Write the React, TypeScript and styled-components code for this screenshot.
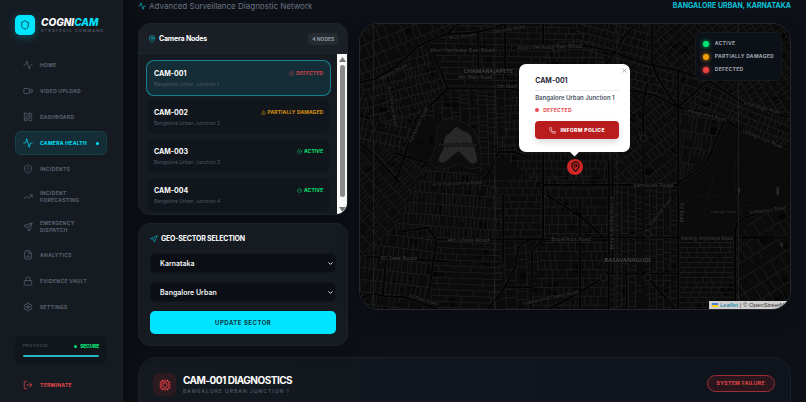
import React from "react";
import styled, { createGlobalStyle, css } from "styled-components";
import {
  Activity, Video, LayoutDashboard, ShieldAlert, Shield, TrendingUp, Send, FileChartColumn, Lock, Settings,
  LogOut, MapPin, Navigation, ChevronDown, CircleAlert, TriangleAlert, CircleCheck, Phone, X, Cpu,
} from "lucide-react";

const cyan = "#00e5ff";
const red = "#e5484d";
const green = "#00e676";
const amber = "#d9920f";

const GlobalStyle = createGlobalStyle`
  *, *::before, *::after { box-sizing: border-box; }
  html, body { margin: 0; background: #0d1117; }
  body { font-family: Inter, "Liberation Sans", sans-serif; color: #fff; overflow: hidden; }
  button, select { font-family: inherit; margin: 0; }
  h1, h2, h3, p, ul { margin: 0; padding: 0; }
  ul { list-style: none; }
  svg { flex: none; display: block; }
`;

const Page = styled.div`
  display: grid;
  grid-template-columns: 123px minmax(0, 1fr);
  height: 100vh;
  overflow: hidden;
  background: linear-gradient(90deg, #0a0c10 123px, #0d1117 150px);
`;

/* ---------- sidebar ---------- */

const Sidebar = styled.aside`
  display: flex;
  flex-direction: column;
  padding: 15px 15px 0 15px;
  background: #161b22;
  border-right: 1px solid #1b2027;
`;

const Brand = styled.div`
  display: flex;
  align-items: center;
  gap: 6px;
  height: 20px;
`;

const BrandMark = styled.div`
  display: grid;
  place-items: center;
  width: 20px;
  height: 20px;
  border-radius: 5px;
  background: ${cyan};
  color: #10262e;
  box-shadow: 0 2px 8px rgba(0, 229, 255, 0.3);
`;

const BrandName = styled.h1`
  font-size: 10px;
  line-height: 12px;
  font-weight: 800;
  font-style: italic;
  span { color: ${cyan}; }
`;

const BrandTag = styled.p`
  font-size: 4px;
  line-height: 6px;
  font-weight: 700;
  letter-spacing: 1px;
  color: #4b5260;
  white-space: nowrap;
`;

const Nav = styled.nav`
  display: flex;
  flex-direction: column;
  gap: 2px;
  margin-top: 18px;
`;

const NavLink = styled.a<{ $active?: boolean; $danger?: boolean }>`
  display: flex;
  align-items: center;
  gap: 7px;
  min-height: 24px;
  padding: 6px 7px;
  border-radius: 6px;
  border: 1px solid transparent;
  font-size: 5px;
  line-height: 7px;
  font-weight: 700;
  letter-spacing: 0.3px;
  text-decoration: none;
  color: #5b6270;
  svg { width: 10px; height: 10px; stroke-width: 1.8; }
  ${(p) => p.$active && css`
    color: ${cyan};
    background: #142d36;
    border-color: #16404a;
    white-space: nowrap;
  `}
  ${(p) => p.$danger && css`color: ${red};`}
`;

const NavText = styled.span`
  flex: 1;
`;

const Dot = styled.i<{ $color: string; $size: number; $glow?: boolean }>`
  display: block;
  flex: none;
  width: ${(p) => p.$size}px;
  height: ${(p) => p.$size}px;
  border-radius: 50%;
  background: ${(p) => p.$color};
  ${(p) => p.$glow && css`box-shadow: 0 0 4px ${p.$color};`}
`;

const Protocol = styled.section`
  margin: 17px 0 9px;
  padding: 7px 8px;
  border-radius: 6px;
  background: #11161c;
`;

const ProtocolRow = styled.div`
  display: flex;
  justify-content: space-between;
  align-items: center;
  font-size: 4px;
  line-height: 6px;
  font-weight: 700;
  letter-spacing: 0.5px;
  color: #3f4652;
`;

const Secure = styled.span`
  display: flex;
  align-items: center;
  gap: 3px;
  font-size: 5px;
  font-weight: 800;
  letter-spacing: -0.2px;
  color: ${green};
`;

const Meter = styled.div`
  height: 2px;
  margin-top: 6px;
  border-radius: 1px;
  background: #2ab4c6;
`;

/* ---------- main ---------- */

const Main = styled.main`
  padding: 0 15px;
  overflow: hidden;
`;

const TopBar = styled.header`
  display: flex;
  justify-content: space-between;
  align-items: center;
  height: 12px;
  margin-bottom: 11px;
`;

const Tagline = styled.p`
  display: flex;
  align-items: center;
  gap: 3px;
  font-size: 8px;
  line-height: 12px;
  color: #6b7280;
  svg { color: #10b5c8; }
`;

const Region = styled.p`
  font-size: 7px;
  line-height: 12px;
  font-weight: 700;
  color: #0cc3d9;
`;

const Columns = styled.div`
  display: grid;
  grid-template-columns: repeat(12, minmax(0, 1fr));
  gap: 11px;
  align-items: start;
`;

const LeftColumn = styled.div`
  grid-column: span 4;
  display: flex;
  flex-direction: column;
  gap: 8px;
`;

const Panel = styled.section`
  border: 1px solid #1d2229;
  border-radius: 12px;
  background: #161b22;
  overflow: hidden;
  box-shadow: 0 6px 14px rgba(0, 0, 0, 0.25);
`;

const PanelHeader = styled.div`
  display: flex;
  align-items: center;
  justify-content: space-between;
  height: 30px;
  padding: 0 9px;
  background: #1b2026;
  border-bottom: 1px solid #20262d;
`;

const PanelTitle = styled.h2`
  display: flex;
  align-items: center;
  gap: 3px;
  font-size: 7px;
  line-height: 10px;
  font-weight: 700;
  letter-spacing: -0.2px;
  svg { color: #10b5c8; }
`;

const Count = styled.span`
  padding: 3px 4px;
  border-radius: 3px;
  background: #262b32;
  font-size: 5px;
  line-height: 6px;
  font-weight: 700;
  color: #9097a3;
`;

const ListBody = styled.div`
  display: flex;
  height: 160px;
`;

const NodeList = styled.ul`
  flex: 1;
  display: flex;
  flex-direction: column;
  gap: 5px;
  padding: 7px 7px 3px 8px;
  overflow: hidden;
`;

const NodeCard = styled.button<{ $selected?: boolean }>`
  display: grid;
  grid-template-columns: 1fr auto;
  align-items: center;
  row-gap: 2px;
  width: 100%;
  height: 34px;
  padding: 6px;
  border: 1px solid #141920;
  border-radius: 7px;
  background: #11161c;
  text-align: left;
  color: #fff;
  ${(p) => p.$selected && css`
    background: #142d36;
    border-color: #142d36;
    box-shadow: 0 0 0 1px #17808e;
  `}
`;

const NodeName = styled.span`
  font-size: 7px;
  line-height: 9px;
  font-weight: 700;
`;

const NodePlace = styled.span`
  grid-column: 1 / -1;
  font-size: 5px;
  line-height: 7px;
  color: #4d5562;
`;

const Status = styled.span<{ $color: string }>`
  display: flex;
  align-items: center;
  gap: 2px;
  font-size: 5px;
  line-height: 7px;
  font-weight: 700;
  letter-spacing: 0.1px;
  color: ${(p) => p.$color};
`;

const ScrollTrack = styled.div`
  display: flex;
  flex-direction: column;
  align-items: center;
  gap: 3px;
  width: 10px;
  padding: 3px 0 2px;
  background: #fafafa;
`;

const ScrollThumb = styled.div`
  flex: 1;
  width: 5px;
  margin-bottom: 7px;
  border-radius: 3px;
  background: #8b8b8b;
`;

const SectorForm = styled.form`
  display: flex;
  flex-direction: column;
  gap: 9px;
  padding: 10px 11px 11px;
`;

const SelectWrap = styled.label`
  display: grid;
  align-items: center;
  grid-template-columns: 1fr 9px;
  color: #fff;
  & > * { grid-row: 1; }
  select { grid-column: 1 / -1; }
  svg { grid-column: 2; pointer-events: none; }
`;

const Select = styled.select`
  appearance: none;
  width: 100%;
  height: 20px;
  padding: 0 9px;
  border: 1px solid #11151c;
  border-radius: 5px;
  background: #0b0e15;
  color: #f3f4f6;
  font-size: 7px;
  font-weight: 600;
`;

const UpdateButton = styled.button`
  height: 23px;
  border: 0;
  border-radius: 5px;
  background: ${cyan};
  color: #083640;
  font-size: 6px;
  font-weight: 700;
  letter-spacing: 0.5px;
`;

/* ---------- map ---------- */

const MapPanel = styled.section`
  grid-column: span 8;
  position: relative;
  height: 287px;
  border: 1px solid #23272d;
  border-radius: 19px;
  overflow: hidden;
  background: #0a0a0a;
  box-shadow: 0 8px 18px rgba(0, 0, 0, 0.3);
`;

const MapArt = styled.svg`
  width: 100%;
  height: 100%;
  font-family: "Noto Sans", "Open Sans", sans-serif;
`;

const Legend = styled.ul`
  position: absolute;
  top: 8px;
  right: 8px;
  display: flex;
  flex-direction: column;
  gap: 6px;
  padding: 7px;
  border: 1px solid #141922;
  border-radius: 7px;
  background: #0c1017;
`;

const LegendItem = styled.li`
  display: flex;
  align-items: center;
  gap: 6px;
  font-size: 5px;
  line-height: 7px;
  font-weight: 700;
  letter-spacing: 0.3px;
  color: #a3a8b1;
`;

const Popup = styled.article`
  position: absolute;
  left: 50%;
  bottom: 157px;
  width: 111px;
  height: 88px;
  margin-left: -56px;
  padding: 11px 11px 12px 16px;
  border-radius: 7px;
  background: #fff;
  color: #1f2937;
  &::after {
    content: "";
    position: absolute;
    left: 50%;
    bottom: -3px;
    width: 7px;
    height: 7px;
    margin-left: -4px;
    background: #fff;
    transform: rotate(45deg);
  }
`;

const PopupTitle = styled.h3`
  padding-bottom: 4px;
  border-bottom: 1px solid #e9ebee;
  font-size: 7px;
  line-height: 11px;
  font-weight: 700;
`;

const PopupPlace = styled.p`
  margin-top: 3px;
  font-size: 6px;
  line-height: 8px;
  font-weight: 600;
  color: #4b5563;
  white-space: nowrap;
`;

const PopupStatus = styled.p`
  display: flex;
  align-items: center;
  gap: 4px;
  margin-top: 4px;
  font-size: 5px;
  line-height: 8px;
  font-weight: 700;
  letter-spacing: 0.3px;
  color: ${red};
`;

const PoliceButton = styled.button`
  display: flex;
  align-items: center;
  justify-content: center;
  gap: 4px;
  width: 100%;
  height: 18px;
  margin-top: 7px;
  border: 0;
  border-radius: 4px;
  background: #b91c1c;
  color: #fff;
  font-size: 5px;
  font-weight: 800;
  letter-spacing: 0.4px;
  white-space: nowrap;
  box-shadow: 0 3px 6px rgba(0, 0, 0, 0.15);
`;

const CloseButton = styled.button`
  position: absolute;
  top: 3px;
  right: 2px;
  padding: 0;
  border: 0;
  background: none;
  color: #757575;
`;

const Marker = styled.div`
  position: absolute;
  left: 50%;
  top: 50%;
  display: grid;
  place-items: center;
  width: 16px;
  height: 16px;
  margin: -8px;
  border-radius: 50%;
  background: #cf2626;
  color: #1c0808;
`;

const Attribution = styled.div`
  position: absolute;
  right: 0;
  bottom: 0;
  display: flex;
  align-items: center;
  gap: 2px;
  width: 81px;
  padding-left: 3px;
  background: #d0d0d0;
  color: #333;
  font-family: "Liberation Sans", sans-serif;
  font-size: 6px;
  line-height: 8px;
  white-space: nowrap;
  a { color: #0078a8; text-decoration: none; }
`;

/* ---------- diagnostics ---------- */

const Diagnostics = styled.section`
  display: flex;
  align-items: flex-start;
  gap: 7px;
  min-height: 120px;
  margin-top: 11px;
  padding: 15px 15px 15px 14px;
  border: 1px solid #1b2028;
  border-radius: 19px;
  background: linear-gradient(90deg, #151a21, #11161e 50%, #0f131b);
`;

const ChipBox = styled.div`
  display: grid;
  place-items: center;
  width: 23px;
  height: 23px;
  border-radius: 6px;
  background: #2c1a21;
  color: #dc3d43;
`;

const DiagHeading = styled.div`
  flex: 1;
  padding-top: 1px;
`;

const DiagTitle = styled.h2`
  font-size: 10px;
  line-height: 13px;
  font-weight: 700;
  letter-spacing: -0.5px;
`;

const DiagPlace = styled.p`
  font-size: 5px;
  line-height: 8px;
  font-weight: 600;
  letter-spacing: 1px;
  color: #4d5562;
`;

const FailureBadge = styled.span`
  margin-top: 2px;
  padding: 0 9px;
  border: 1px solid #9c2f36;
  border-radius: 9px;
  background: #2b161d;
  color: ${red};
  font-size: 5px;
  line-height: 15px;
  font-weight: 700;
  letter-spacing: 0.4px;
`;

/* ---------- street map data ---------- */

type District = { area: string; cx: number; cy: number; angle: number; row: number; step: number };

const districts: District[] = [
  { area: "0,0 99,0 88,10 63,20 16,55 0,60", cx: 50, cy: 30, angle: -22, row: 13, step: 7 },
  { area: "99,0 217,0 217,20 146,65 88,65 70,20", cx: 150, cy: 33, angle: 1, row: 6, step: 12 },
  { area: "16,55 63,20 88,65 56,96 10,100 0,60", cx: 45, cy: 65, angle: -15, row: 9, step: 4 },
  { area: "0,60 10,100 56,96 46,130 0,120", cx: 25, cy: 100, angle: 12, row: 10, step: 5 },
  { area: "88,65 153,65 146,130 120,150 118,110 96,98 56,96", cx: 110, cy: 90, angle: 88, row: 9, step: 5 },
  { area: "153,65 217,0 274,67 250,150 184,165 139,129", cx: 200, cy: 100, angle: 0, row: 8, step: 6 },
  { area: "217,20 217,0 294,0 294,40 350,57 320,84 274,67", cx: 270, cy: 40, angle: 15, row: 8, step: 6 },
  { area: "294,0 360,0 384,79 350,57 294,40", cx: 340, cy: 35, angle: -42, row: 7, step: 6 },
  { area: "360,0 432,0 432,94 384,79", cx: 400, cy: 45, angle: 58, row: 8, step: 5 },
  { area: "320,84 350,57 432,94 432,125 367,95", cx: 370, cy: 85, angle: 22, row: 7, step: 5 },
  { area: "320,84 367,95 354,127 320,160", cx: 340, cy: 120, angle: 10, row: 16, step: 4 },
  { area: "274,67 320,84 320,162 250,162 250,130", cx: 285, cy: 120, angle: -38, row: 10, step: 5 },
  { area: "0,120 46,130 68,140 35,205 0,234", cx: 30, cy: 165, angle: 48, row: 11, step: 4 },
  { area: "68,140 129,154 144,172 144,217 77,217 35,205", cx: 100, cy: 185, angle: 4, row: 11, step: 4 },
  { area: "129,154 184,150 184,215 144,215", cx: 160, cy: 185, angle: 0, row: 7, step: 8 },
  { area: "184,150 250,150 250,287 172,287 184,215", cx: 215, cy: 220, angle: 0, row: 9, step: 7 },
  { area: "0,234 35,205 77,217 70,287 0,287", cx: 35, cy: 255, angle: 7, row: 12, step: 5 },
  { area: "77,217 144,217 143,269 128,287 70,287", cx: 105, cy: 250, angle: 2, row: 6, step: 14 },
  { area: "144,217 184,215 172,287 128,287", cx: 155, cy: 255, angle: 88, row: 11, step: 9 },
  { area: "250,162 320,162 320,287 250,287", cx: 285, cy: 225, angle: 90, row: 7, step: 6 },
  { area: "320,215 377,215 377,287 320,287", cx: 350, cy: 250, angle: 0, row: 5, step: 9 },
  { area: "377,215 404,189 432,185 432,287 377,287", cx: 405, cy: 250, angle: -32, row: 14, step: 9 },
];

function seeded(seed: number) {
  let s = seed;
  return () => {
    s = (s * 16807) % 2147483647;
    return s / 2147483647;
  };
}

function streetGrid(d: District, seed: number) {
  const next = seeded(seed * 7919 + 13);
  let path = "";
  for (let y = -90; y < 90; y += d.row) {
    path += `M-90 ${y}H90`;
    for (let x = -90; x < 90; x += d.step * (0.7 + next() * 0.6)) {
      if (next() > 0.12) path += `M${x.toFixed(1)} ${y}v${next() > 0.2 ? d.row : d.row / 2}`;
    }
  }
  return path;
}

function buildings(seed: number) {
  const next = seeded(seed);
  return Array.from({ length: 150 }, () => {
    const w = 3 + Math.floor(next() * 7);
    const h = 2 + Math.floor(next() * 7);
    return `M${Math.floor(next() * 432)} ${Math.floor(next() * 287)}h${w}v${h}h${-w}z`;
  }).join("");
}

const avenues = [
  "M0 59L16 55Q40 42 50 30Q60 19 88 10L99 0M88 10Q120 11 146 0",
  "M88 65H153L170 70L217 66M88 65L56 96Q50 120 35 160M88 65L70 20",
  "M146 0V55M119 8V55M184 0V20",
  "M217 20L250 27L287 40L320 47L350 57L384 79L430 94",
  "M277 2Q262 14 260 24L225 70M294 0V40M294 40Q300 60 320 84",
  "M217 66Q250 62 274 67L297 72L320 84L337 87L367 95Q378 105 390 110L432 125",
  "M320 84L350 57L375 20M320 47V287M285 118V287M289 60Q283 80 285 111",
  "M367 95L354 127Q350 141 340 147L320 160",
  "M184 162H320M250 137V287M254 137V251M184 130V215",
  "M0 120L16 134L40 160M35 130L68 140M122 159Q131 151 139 129H156L169 135",
  "M6 234L89 239M39 209L68 205L77 217L68 279M77 217H226",
  "M0 276L14 271L24 274L46 275L78 287M26 237L23 274",
  "M184 172V215L173 229L172 287M144 172V240M128 287L143 269L156 245L159 225L173 215M144 265H172",
  "M188 172L226 197L245 215M217 189L240 210M217 215H414M289 206L317 172",
  "M377 287V215Q376 200 384 197Q394 190 432 185M384 215H432",
  "M244 251H320M245 255L217 272L190 287M289 255L317 287M221 180V287M268 251V287",
];

const labels: { text: string; x: number; y: number; r?: number; size?: number; strong?: boolean }[] = [
  { text: "BGS Flyover", x: 104, y: 14, r: -7 },
  { text: "Mysore Road", x: 151, y: 7, r: -10 },
  { text: "Mysore Road", x: 34, y: 50, r: -28 },
  { text: "Aluri Venkata Rao Road", x: 103, y: 28, size: 6 },
  { text: "Aluri Venkata Rao Road", x: 191, y: 25, r: -2, size: 6 },
  { text: "CHAMARAJAPETE", x: 129, y: 49, size: 6, strong: true },
  { text: "4th Main Road", x: 116, y: 56 },
  { text: "5th Main", x: 148, y: 65 },
  { text: "Bull Temple Road", x: 31, y: 83, r: 80 },
  { text: "Gavipuram Road", x: 60, y: 102, r: -64 },
  { text: "Kempambudhi Lake", x: 98, y: 123, size: 4 },
  { text: "H.N. Narasimha Road", x: 98, y: 162, r: -3 },
  { text: "Vanivilas Road", x: 295, y: 164, size: 6 },
  { text: "Krumbigal Road", x: 404, y: 86, r: 15 },
  { text: "Lalbagh Fort Road", x: 347, y: 93, r: 14 },
  { text: "Lalbagh Fort Road", x: 404, y: 117, r: 23 },
  { text: "4th Cross Road", x: 109, y: 219, size: 6 },
  { text: "50 Feet Road", x: 39, y: 238, size: 6 },
  { text: "50 Feet Road", x: 63, y: 279, r: 16 },
  { text: "Bugle Rock Road", x: 212, y: 218 },
  { text: "Subbarama Chetty Road", x: 192, y: 277, r: -12 },
  { text: "BASAVANAGUDI", x: 269, y: 240, size: 6, strong: true },
  { text: "Lalbagh Tank", x: 365, y: 190, size: 4 },
  { text: "Karanji Anjaneya Road", x: 349, y: 217 },
  { text: "Siddapura Road", x: 410, y: 189, r: -8 },
  { text: "Krishna Rajendra Road", x: 251, y: 200, r: 90 },
  { text: "Diagonal Road", x: 303, y: 190, r: -52 },
  { text: "RV Road", x: 322, y: 190, r: 90 },
];

function StreetMap() {
  return (
    <MapArt viewBox="0 0 432 287" preserveAspectRatio="xMidYMid slice" role="img" aria-label="Street map of Bangalore Urban">
      <defs>
        {districts.map((d, i) => (
          <clipPath id={`district-${i}`} key={i}><polygon points={d.area} /></clipPath>
        ))}
      </defs>
      <rect width="432" height="287" fill="#0b0b0b" />
      <path d={buildings(4242)} fill="#050505" />
      {districts.map((d, i) => (
        <g key={i} clipPath={`url(#district-${i})`}>
          <path
            d={streetGrid(d, i + 1)}
            transform={`translate(${d.cx} ${d.cy}) rotate(${d.angle})`}
            fill="none" stroke="#1f1f1f" strokeWidth="0.8"
          />
        </g>
      ))}
      <polygon points="367,97 430,127 432,183 404,187 380,200 375,213 322,213 322,162 342,148 355,128" fill="#0b0b0b" />
      <path d="M325 180Q350 165 372 178T420 170M340 205Q350 180 356 150M380 130Q370 160 385 195" fill="none" stroke="#141414" strokeWidth="0.8" />
      <path d="M83 97Q74 105 77 120L70 140Q80 152 100 140Q112 150 122 143Q124 120 113 105Q98 92 83 97Z" fill="#0d0d0d" stroke="#181818" />
      <path d="M96 104Q99 103 102 107L109 110Q113 113 113 118L115 124L118 137Q116 142 111 140L99 128L88 137Q83 142 79 138Q79 134 84 126Q83 120 86 113Q91 110 96 104Z" fill="#282828" />
      {avenues.map((d) => <path key={d} d={d} fill="none" stroke="#1e1e1e" strokeWidth="3" />)}
      {avenues.map((d) => <path key={d} d={d} fill="none" stroke="#030303" strokeWidth="2" />)}
      {[[285, 115], [289, 211], [245, 255], [289, 255]].map(([x, y]) => (
        <circle key={`${x}-${y}`} cx={x} cy={y} r="3.5" fill="#0b0b0b" stroke="#242424" />
      ))}
      <path d="M381 166v3M420 165v6M424 221v2" stroke="#2a2a2a" strokeWidth="2.4" strokeLinecap="round" />
      <path d="M13.5 0V287M135.5 0V287M258.5 0V287M380.5 0V287" stroke="#333" strokeWidth="0.5" />
      {labels.map((l, i) => (
        <text
          key={i} transform={`translate(${l.x} ${l.y}) rotate(${l.r ?? 0})`} textAnchor="middle"
          fontSize={l.size ?? 5} fontWeight={l.strong ? 600 : 400} fill={l.strong ? "#4a4a4a" : "#404040"}
          stroke="#080808" strokeWidth="1" paintOrder="stroke"
        >
          {l.text}
        </text>
      ))}
    </MapArt>
  );
}

/* ---------- page ---------- */

const navItems = [
  { label: "HOME", icon: Activity },
  { label: "VIDEO UPLOAD", icon: Video },
  { label: "DASHBOARD", icon: LayoutDashboard },
  { label: "CAMERA HEALTH", icon: Activity, active: true },
  { label: "INCIDENTS", icon: ShieldAlert },
  { label: "INCIDENT FORECASTING", icon: TrendingUp },
  { label: "EMERGENCY DISPATCH", icon: Send },
  { label: "ANALYTICS", icon: FileChartColumn },
  { label: "EVIDENCE VAULT", icon: Lock },
  { label: "SETTINGS", icon: Settings },
];

const cameras = [
  { name: "CAM-001", place: "Bangalore Urban Junction 1", status: "DEFECTED", color: "#c9434a", icon: CircleAlert },
  { name: "CAM-002", place: "Bangalore Urban Junction 2", status: "PARTIALLY DAMAGED", color: amber, icon: TriangleAlert },
  { name: "CAM-003", place: "Bangalore Urban Junction 3", status: "ACTIVE", color: green, icon: CircleCheck },
  { name: "CAM-004", place: "Bangalore Urban Junction 4", status: "ACTIVE", color: green, icon: CircleCheck },
];

export default function App() {
  return (
    <>
      <GlobalStyle />
      <Page>
        <Sidebar>
          <Brand>
            <BrandMark><Shield size={10} /></BrandMark>
            <div>
              <BrandName>COGNI<span>CAM</span></BrandName>
              <BrandTag>STRATEGIC COMMAND</BrandTag>
            </div>
          </Brand>
          <Nav>
            {navItems.map(({ label, icon: Icon, active }) => (
              <NavLink key={label} href="#" $active={active}>
                <Icon />
                <NavText>{label}</NavText>
                {active && <Dot $color={cyan} $size={3} />}
              </NavLink>
            ))}
          </Nav>
          <Protocol>
            <ProtocolRow>
              <span>PROTOCOL</span>
              <Secure><Dot $color={green} $size={3} />SECURE</Secure>
            </ProtocolRow>
            <Meter />
          </Protocol>
          <NavLink href="#" $danger><LogOut /><NavText>TERMINATE</NavText></NavLink>
        </Sidebar>

        <Main>
          <TopBar>
            <Tagline><Activity size={8} />Advanced Surveillance Diagnostic Network</Tagline>
            <Region>BANGALORE URBAN, KARNATAKA</Region>
          </TopBar>

          <Columns>
            <LeftColumn>
              <Panel>
                <PanelHeader>
                  <PanelTitle><MapPin size={8} />Camera Nodes</PanelTitle>
                  <Count>4 NODES</Count>
                </PanelHeader>
                <ListBody>
                  <NodeList>
                    {cameras.map(({ name, place, status, color, icon: Icon }, i) => (
                      <li key={name}>
                        <NodeCard type="button" $selected={i === 0}>
                          <NodeName>{name}</NodeName>
                          <Status $color={color}><Icon size={5} />{status}</Status>
                          <NodePlace>{place}</NodePlace>
                        </NodeCard>
                      </li>
                    ))}
                  </NodeList>
                  <ScrollTrack aria-hidden="true">
                    <svg width="7" height="5" viewBox="0 0 7 5"><path d="M3.5 0L7 5H0z" fill="#777" /></svg>
                    <ScrollThumb />
                    <svg width="7" height="5" viewBox="0 0 7 5"><path d="M3.5 5L0 0h7z" fill="#777" /></svg>
                  </ScrollTrack>
                </ListBody>
              </Panel>

              <Panel>
                <SectorForm onSubmit={(e) => e.preventDefault()}>
                  <PanelTitle><Navigation size={8} />GEO-SECTOR SELECTION</PanelTitle>
                  <SelectWrap>
                    <Select aria-label="State" defaultValue="Karnataka"><option>Karnataka</option></Select>
                    <ChevronDown size={7} strokeWidth={3} />
                  </SelectWrap>
                  <SelectWrap>
                    <Select aria-label="District" defaultValue="Bangalore Urban"><option>Bangalore Urban</option></Select>
                    <ChevronDown size={7} strokeWidth={3} />
                  </SelectWrap>
                  <UpdateButton type="submit">UPDATE SECTOR</UpdateButton>
                </SectorForm>
              </Panel>
            </LeftColumn>

            <MapPanel>
              <StreetMap />
              <Legend>
                <LegendItem><Dot $color={green} $size={6} $glow />ACTIVE</LegendItem>
                <LegendItem><Dot $color="#f59e0b" $size={6} $glow />PARTIALLY DAMAGED</LegendItem>
                <LegendItem><Dot $color="#ef4444" $size={6} $glow />DEFECTED</LegendItem>
              </Legend>
              <Marker><MapPin size={11} strokeWidth={2.4} /></Marker>
              <Popup>
                <CloseButton type="button" aria-label="Close"><X size={7} /></CloseButton>
                <PopupTitle>CAM-001</PopupTitle>
                <PopupPlace>Bangalore Urban Junction 1</PopupPlace>
                <PopupStatus><Dot $color={red} $size={4} />DEFECTED</PopupStatus>
                <PoliceButton type="button"><Phone size={7} />INFORM POLICE</PoliceButton>
              </Popup>
              <Attribution>
                <svg width="6" height="4" viewBox="0 0 6 4">
                  <path fill="#4c7be1" d="M0 0h6v2H0z" /><path fill="#ffd500" d="M0 2h6v2H0z" />
                </svg>
                <span><a href="#">Leaflet</a> | © OpenStreetMap</span>
              </Attribution>
            </MapPanel>
          </Columns>

          <Diagnostics>
            <ChipBox><Cpu size={12} /></ChipBox>
            <DiagHeading>
              <DiagTitle>CAM-001 DIAGNOSTICS</DiagTitle>
              <DiagPlace>BANGALORE URBAN JUNCTION 1</DiagPlace>
            </DiagHeading>
            <FailureBadge>SYSTEM FAILURE</FailureBadge>
          </Diagnostics>
        </Main>
      </Page>
    </>
  );
}
